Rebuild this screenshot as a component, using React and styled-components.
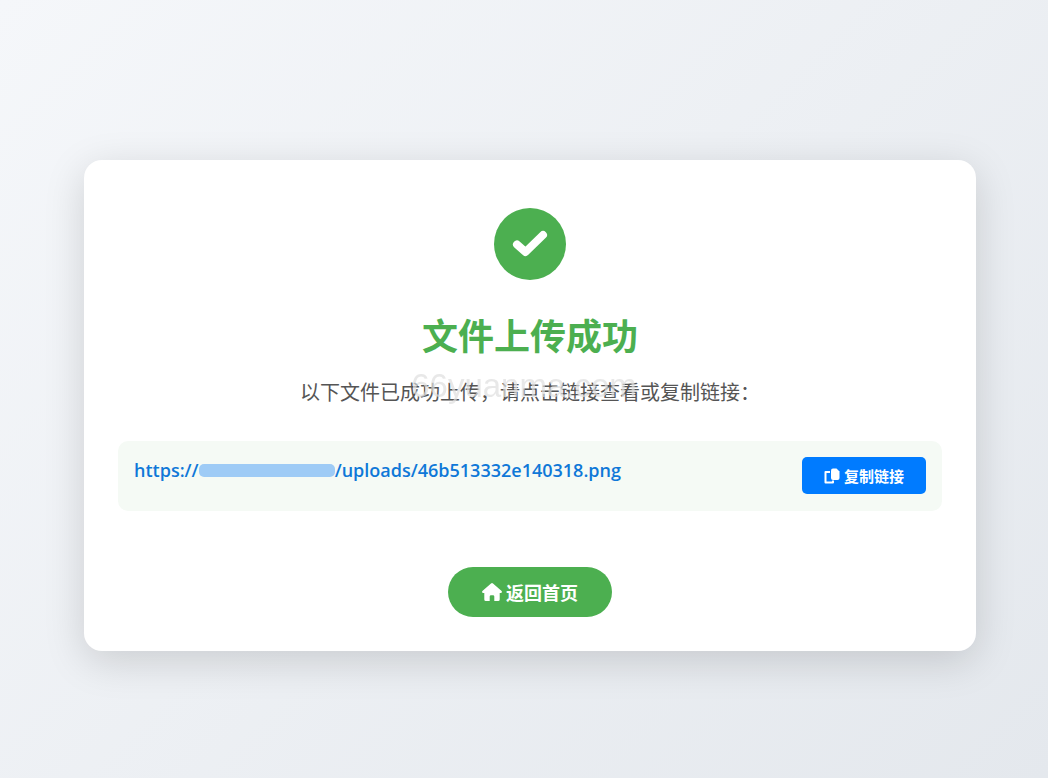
import { useState } from 'react';
import styled, { createGlobalStyle } from 'styled-components';

const FILE_PATH = '/uploads/46b513332e140318.png';

const App = () => {
  const [copied, setCopied] = useState(false);

  const copyLink = () => {
    navigator.clipboard?.writeText(FILE_PATH);
    setCopied(true);
  };

  return (
    <>
      <GlobalStyle />
      <Page>
        <Card>
          <StatusIcon>
            <svg viewBox="0 0 72 72" aria-hidden="true">
              <path d="M23 36.5L31.5 44L49 27" />
            </svg>
          </StatusIcon>
          <Title>文件上传成功</Title>
          <Message>以下文件已成功上传，请点击链接查看或复制链接：</Message>

          <FileRow>
            <FileLink href={FILE_PATH}>
              https://
              <HiddenHost />
              {FILE_PATH}
            </FileLink>
            <CopyButton type="button" onClick={copyLink} data-copied={copied}>
              <CopyIcon viewBox="0 0 16 16" aria-hidden="true">
                <path
                  d="M6 4H1.5V14.5H9V12.5"
                  fill="none"
                  stroke="currentColor"
                  strokeWidth="2"
                  strokeLinejoin="round"
                />
                <path d="M9 0.5H12.5L15.5 3.5V10Q15.5 12 13.5 12H9Q7 12 7 10V2.5Q7 0.5 9 0.5Z" />
              </CopyIcon>
              复制链接
            </CopyButton>
          </FileRow>

          <HomeLink href="/">
            <HomeIcon viewBox="0 0 20 18" aria-hidden="true">
              <path d="M10 0Q10.5 0 11 .4L19.6 8Q20.3 8.9 19.5 9.8Q19.2 10.1 18.6 10.1H17.7V16.5Q17.7 18 16.2 18H12.3V13.5Q12.3 12.2 11 12.2H9Q7.7 12.2 7.7 13.5V18H3.8Q2.3 18 2.3 16.5V10.1H1.4Q.8 10.1 .5 9.8Q-.3 8.9 .4 8L9 .4Q9.5 0 10 0Z" />
            </HomeIcon>
            返回首页
          </HomeLink>
        </Card>
        <Watermark aria-hidden="true">66yuanma.com</Watermark>
      </Page>
    </>
  );
};

export default App;

const GlobalStyle = createGlobalStyle`
  * {
    box-sizing: border-box;
  }

  body {
    margin: 0;
    font-family: 'Open Sans', 'Noto Sans CJK SC', sans-serif;
  }
`;

const Page = styled.main`
  min-height: 100vh;
  padding: 160px 72px 32px 84px;
  background: linear-gradient(135deg, #f5f7fa, #e4e8ed);
`;

const Card = styled.section`
  display: flex;
  flex-direction: column;
  align-items: center;
  padding: 48px 34px 34px;
  border-radius: 18px;
  background: #fff;
  box-shadow: 0 10px 40px rgba(0, 0, 0, 0.15);
`;

const StatusIcon = styled.div`
  width: 72px;
  height: 72px;
  border-radius: 50%;
  background: #4caf50;

  path {
    fill: none;
    stroke: #fff;
    stroke-width: 8;
    stroke-linecap: round;
    stroke-linejoin: round;
  }
`;

const Title = styled.h1`
  margin: 33px 0 16px;
  font-size: 36px;
  line-height: 48px;
  color: #4caf50;
`;

const Message = styled.p`
  margin: 0 0 32px;
  font-size: 20px;
  line-height: 32px;
  color: #555;
`;

const Watermark = styled.span`
  position: fixed;
  top: 50%;
  left: 50%;
  transform: translate(-50%, -50%);
  padding-bottom: 6px;
  font-family: 'Liberation Sans', Arial, sans-serif;
  font-size: 33px;
  line-height: 40px;
  color: rgba(222, 222, 222, 0.7);
  pointer-events: none;
`;

const FileRow = styled.div`
  display: flex;
  justify-content: space-between;
  align-items: flex-start;
  width: 100%;
  min-height: 70px;
  padding: 16px;
  border-radius: 10px;
  background: #f5faf5;
`;

const FileLink = styled.a`
  display: flex;
  align-items: center;
  font-size: 18px;
  font-weight: 600;
  line-height: 26px;
  color: #0f78d8;
  text-decoration: none;
`;

const HiddenHost = styled.span`
  width: 136px;
  height: 13px;
  border-radius: 5px;
  background: #9ecbf6;
`;

const CopyButton = styled.button`
  display: flex;
  align-items: center;
  justify-content: center;
  gap: 4px;
  height: 37px;
  padding: 0 22px;
  border: 0;
  border-radius: 5px;
  background: #007bff;
  font-family: inherit;
  font-size: 15px;
  font-weight: 700;
  color: #fff;
  cursor: pointer;
`;

const CopyIcon = styled.svg`
  width: 16px;
  height: 16px;
  fill: currentColor;
`;

const HomeLink = styled.a`
  display: flex;
  align-items: center;
  gap: 4px;
  height: 50px;
  margin-top: 56px;
  padding: 0 34px;
  border-radius: 25px;
  background: #4caf50;
  font-size: 18px;
  font-weight: 700;
  color: #fff;
  text-decoration: none;
`;

const HomeIcon = styled.svg`
  width: 20px;
  height: 18px;
  fill: currentColor;
`;
